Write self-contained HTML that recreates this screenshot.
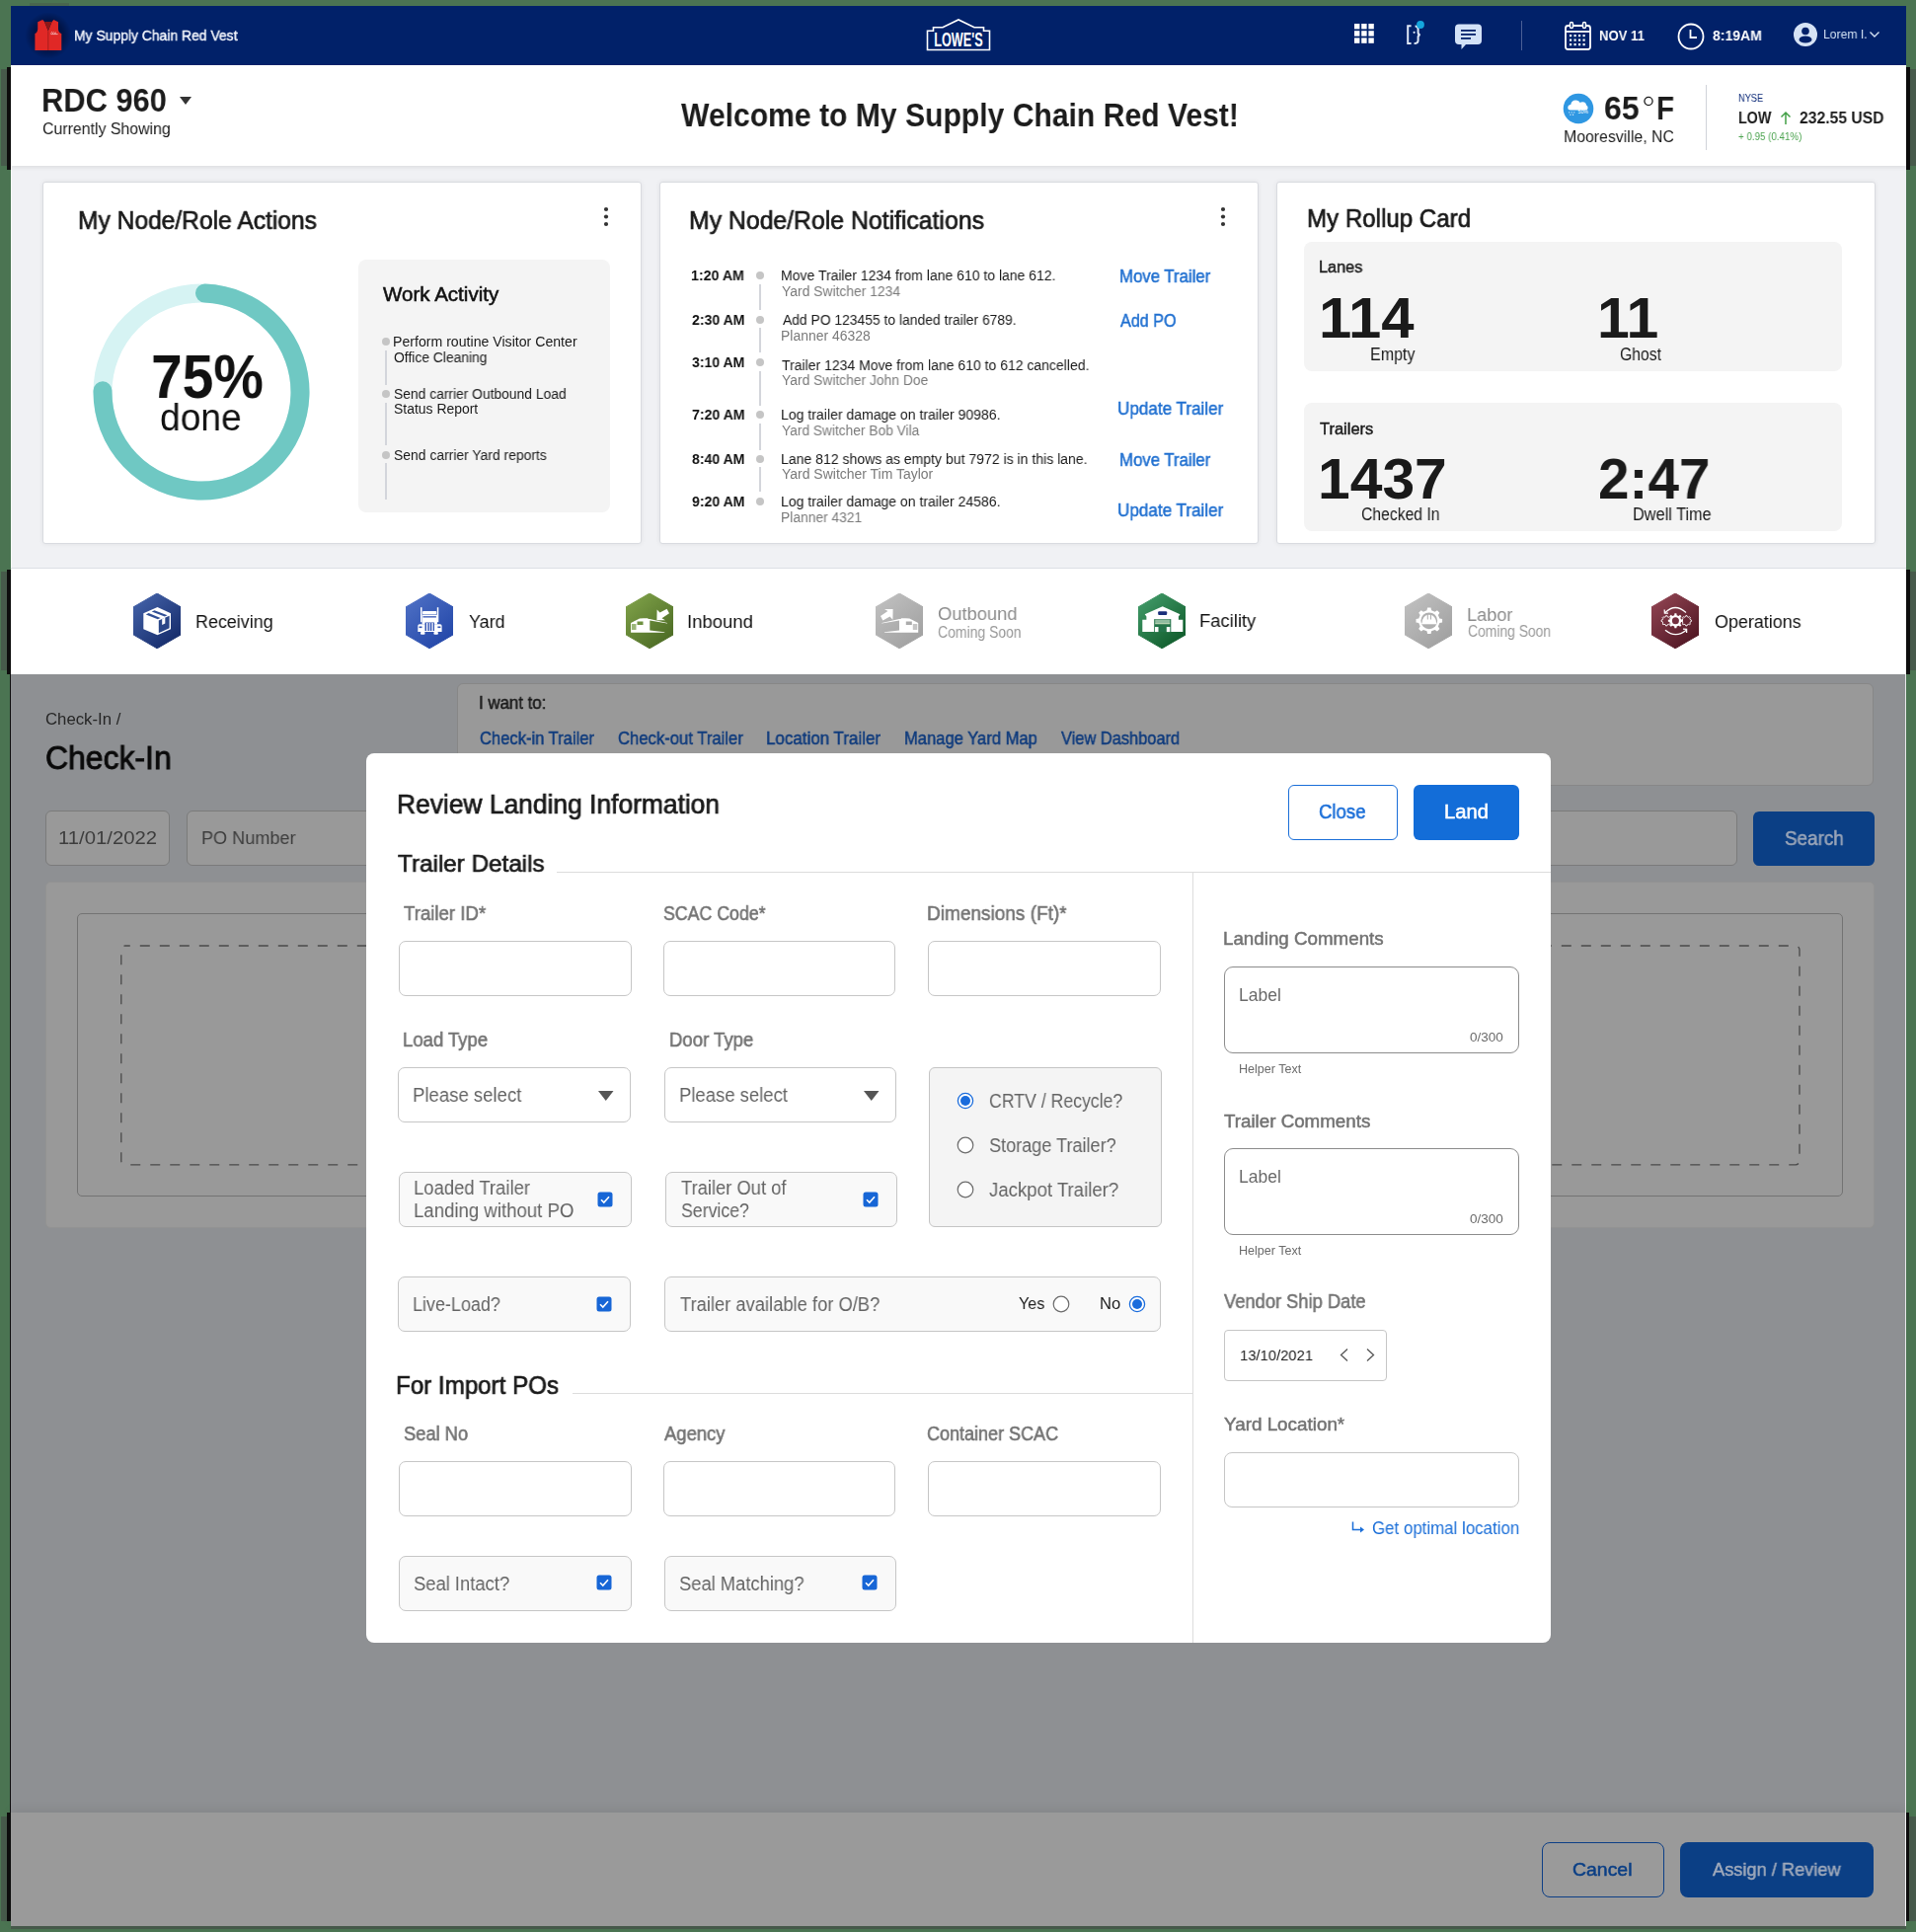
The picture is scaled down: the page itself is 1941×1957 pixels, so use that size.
<!DOCTYPE html>
<html><head><meta charset="utf-8"><style>
html,body{margin:0;padding:0;}
body{width:1941px;height:1957px;position:relative;overflow:hidden;background:#4b7452;font-family:"Liberation Sans",sans-serif;}
body>div,body>svg,body>span{position:absolute;box-sizing:border-box;}
.t{white-space:nowrap;line-height:1;transform-origin:0 0;will-change:transform;}
.bm{display:inline-block;width:0;height:0;}
</style></head><body>
<div style="left:11.0px;top:6.0px;width:1920.0px;height:1945.0px;background:#f0f1f4;"></div>
<div style="left:11.0px;top:168.0px;width:1.0px;height:407.0px;background:#fff;"></div>
<div style="left:1.0px;top:70.0px;width:6.0px;height:98.0px;background:rgba(70,70,70,0.55);"></div>
<div style="left:7.0px;top:68.0px;width:4.0px;height:104.0px;background:#0d0d0d;"></div>
<div style="left:1935.0px;top:70.0px;width:6.0px;height:98.0px;background:rgba(70,70,70,0.55);"></div>
<div style="left:1931.0px;top:68.0px;width:4.0px;height:104.0px;background:#0d0d0d;"></div>
<div style="left:1.0px;top:579.0px;width:6.0px;height:100.0px;background:rgba(70,70,70,0.55);"></div>
<div style="left:7.0px;top:577.0px;width:4.0px;height:106.0px;background:#0d0d0d;"></div>
<div style="left:1935.0px;top:579.0px;width:6.0px;height:100.0px;background:rgba(70,70,70,0.55);"></div>
<div style="left:1931.0px;top:577.0px;width:4.0px;height:106.0px;background:#0d0d0d;"></div>
<div style="left:10.0px;top:683.0px;width:1.0px;height:1154.0px;background:#0d0d0d;"></div>
<div style="left:1.0px;top:1840.0px;width:6.0px;height:106.0px;background:rgba(70,70,70,0.55);"></div>
<div style="left:7.0px;top:1836.0px;width:4.0px;height:110.0px;background:#0d0d0d;"></div>
<div style="left:1934.0px;top:1840.0px;width:7.0px;height:106.0px;background:rgba(70,70,70,0.55);"></div>
<div style="left:1931.0px;top:1836.0px;width:3.0px;height:110.0px;background:#0d0d0d;"></div>
<div style="left:11.0px;top:1951.0px;width:1920.0px;height:3.0px;background:rgba(70,70,70,0.55);"></div>
<div style="left:30.0px;top:3.0px;width:40.0px;height:3.0px;background:rgba(70,70,70,0.3);"></div>
<div style="left:11.0px;top:6.0px;width:1920.0px;height:60.0px;background:#012169;"></div>
<div style="left:25.0px;top:12.0px;width:48.0px;height:48.0px;background:radial-gradient(circle at 50% 50%, rgba(0,8,40,0.85) 0%, rgba(0,8,40,0.5) 45%, rgba(1,33,105,0) 70%);"></div>
<svg style="left:34.0px;top:19.0px;" width="29" height="34" viewBox="0 0 29 34">
<path d="M1.4 32 L1.4 15.1 Q3.8 14.2 4.2 10.4 L4.2 3.2 L9.2 1 L11 3 L14.8 12.3 L18.6 3 L20.4 1 L25 3.2 L25 10.4 Q25.4 14.2 28.3 15.1 L28.3 32 Z" fill="#e02826"/>
<path d="M11 3 L18.6 3 L14.8 12.3 Z" fill="#8e1818"/>
<path d="M14.8 12.3 L14.8 32" stroke="#a01c1c" stroke-width="0.9"/>
<path d="M17.6 14.6 L18.6 13.4 L19.6 14.6 L20.6 13.6 L21.6 14.6 L23 13.8 M17.4 15.6 L24.6 15.6" fill="none" stroke="#f6dada" stroke-width="0.7"/></svg>
<span id="tx0" class="t" style="left:74.66px;top:29.00px;font-size:14.53px;color:#f2f5fc;-webkit-text-stroke:0.39px #f2f5fc;transform:scaleX(0.9581);">My Supply Chain Red Vest</span>
<svg style="left:937.0px;top:18.0px;" width="68" height="35" viewBox="0 0 68 35">
<path d="M2.5 32.5 L2.5 13.2 L8.5 13.2 L8.5 9.8 L18 9.8 L34 2 L50 9.8 L59.5 9.8 L59.5 13.2 L65.5 13.2 L65.5 32.5 Z" fill="none" stroke="#fff" stroke-width="1.6"/>
<text x="9.2" y="28.8" font-family="Liberation Sans" font-weight="700" font-size="20" fill="#fff" textLength="49.4" lengthAdjust="spacingAndGlyphs">LOWE'S</text></svg>
<svg style="left:1372.0px;top:23.5px;" width="20" height="20" viewBox="0 0 20 20"><rect x="0" y="0" width="5.4" height="5.4" fill="#fff"/><rect x="7.2" y="0" width="5.4" height="5.4" fill="#fff"/><rect x="14.4" y="0" width="5.4" height="5.4" fill="#fff"/><rect x="0" y="7.2" width="5.4" height="5.4" fill="#fff"/><rect x="7.2" y="7.2" width="5.4" height="5.4" fill="#fff"/><rect x="14.4" y="7.2" width="5.4" height="5.4" fill="#fff"/><rect x="0" y="14.4" width="5.4" height="5.4" fill="#fff"/><rect x="7.2" y="14.4" width="5.4" height="5.4" fill="#fff"/><rect x="14.4" y="14.4" width="5.4" height="5.4" fill="#fff"/></svg>
<svg style="left:1422.0px;top:20.0px;" width="24" height="26" viewBox="0 0 24 26">
<path d="M7.6 6.2 L4.2 6.2 L4.2 24 L7.6 24" fill="none" stroke="#dfe8f7" stroke-width="2"/>
<path d="M10.6 24 Q14.6 24 14.6 21 L14.6 17.5 Q14.6 15.6 16.6 15.2 Q14.6 14.8 14.6 12.9 L14.6 9.5 Q14.6 6.6 11.6 6.6" fill="none" stroke="#dfe8f7" stroke-width="2"/>
<circle cx="10.6" cy="12.8" r="1.1" fill="#dfe8f7"/>
<circle cx="17" cy="5" r="3.9" fill="#14a6dd"/></svg>
<svg style="left:1473.0px;top:23.0px;" width="30" height="29" viewBox="0 0 30 29">
<path d="M5 1.5 L24 1.5 Q28 1.5 28 5.5 L28 18 Q28 22 24 22 L12 22 L7.5 27 L7.5 22 L5 22 Q1 22 1 18 L1 5.5 Q1 1.5 5 1.5 Z" fill="#d3e2f7"/>
<rect x="7" y="7" width="15" height="1.8" fill="#012169"/><rect x="7" y="11" width="15" height="1.8" fill="#012169"/><rect x="7" y="15" width="10" height="1.8" fill="#012169"/></svg>
<div style="left:1540.5px;top:21.0px;width:1.2px;height:30.0px;background:#4a5f96;"></div>
<svg style="left:1584.0px;top:21.0px;" width="29" height="31" viewBox="0 0 29 31">
<rect x="2" y="5" width="25" height="24" rx="2.5" fill="none" stroke="#fff" stroke-width="1.8"/>
<line x1="2" y1="11" x2="27" y2="11" stroke="#fff" stroke-width="1.8"/>
<rect x="6.5" y="1.5" width="3" height="6" rx="1.5" fill="#012169" stroke="#fff" stroke-width="1.5"/>
<rect x="19.5" y="1.5" width="3" height="6" rx="1.5" fill="#012169" stroke="#fff" stroke-width="1.5"/>
<rect x="6" y="14" width="2.2" height="2.2" fill="#fff"/><rect x="10.5" y="14" width="2.2" height="2.2" fill="#fff"/><rect x="15" y="14" width="2.2" height="2.2" fill="#fff"/><rect x="19.5" y="14" width="2.2" height="2.2" fill="#fff"/><rect x="6" y="18.5" width="2.2" height="2.2" fill="#fff"/><rect x="10.5" y="18.5" width="2.2" height="2.2" fill="#fff"/><rect x="15" y="18.5" width="2.2" height="2.2" fill="#fff"/><rect x="19.5" y="18.5" width="2.2" height="2.2" fill="#fff"/><rect x="6" y="23" width="2.2" height="2.2" fill="#fff"/><rect x="10.5" y="23" width="2.2" height="2.2" fill="#fff"/><rect x="15" y="23" width="2.2" height="2.2" fill="#fff"/><rect x="19.5" y="23" width="2.2" height="2.2" fill="#fff"/></svg>
<span id="tx1" class="t" style="left:1620.12px;top:29.00px;font-size:14.53px;color:#ffffff;font-weight:700;transform:scaleX(0.9036);">NOV 11</span>
<svg style="left:1698.0px;top:22.0px;" width="30" height="30" viewBox="0 0 30 30">
<circle cx="15" cy="15" r="12.5" fill="none" stroke="#fff" stroke-width="1.8"/>
<path d="M14.5 8 L14.5 16 L21 16" fill="none" stroke="#fff" stroke-width="1.8"/></svg>
<span id="tx2" class="t" style="left:1735.05px;top:29.00px;font-size:14.53px;color:#ffffff;font-weight:700;transform:scaleX(0.9660);">8:19AM</span>
<svg style="left:1816.0px;top:22.0px;" width="26" height="26" viewBox="0 0 26 26">
<circle cx="13" cy="13" r="12" fill="#d6e3f5"/>
<circle cx="13" cy="9.5" r="3.8" fill="#012169"/>
<ellipse cx="13" cy="18" rx="6.5" ry="3.6" fill="#012169"/></svg>
<span id="tx3" class="t" style="left:1846.50px;top:28.20px;font-size:13.08px;color:#d6e3f5;transform:scaleX(0.9296);">Lorem I.</span>
<svg style="left:1893.0px;top:31.0px;" width="12" height="8" viewBox="0 0 12 8"><path d="M1.5 1.5 L6 6 L10.5 1.5" fill="none" stroke="#d6e3f5" stroke-width="1.4"/></svg>
<div style="left:11.0px;top:66.0px;width:1920.0px;height:102.0px;background:#fff;box-shadow:0 2px 4px rgba(0,0,0,0.08);"></div>
<span id="tx4" class="t" style="left:41.74px;top:86.20px;font-size:32.85px;color:#1c1c1c;font-weight:700;transform:scaleX(0.9394);">RDC 960</span>
<svg style="left:181.0px;top:97.0px;" width="14" height="10" viewBox="0 0 14 10"><path d="M1 1 L13 1 L7 9 Z" fill="#333"/></svg>
<span id="tx5" class="t" style="left:42.99px;top:121.90px;font-size:17.01px;color:#1c1c1c;transform:scaleX(0.9339);">Currently Showing</span>
<span id="tx6" class="t" style="left:689.97px;top:100.00px;font-size:33.43px;color:#1c1c1c;font-weight:700;transform:scaleX(0.9008);">Welcome to My Supply Chain Red Vest!</span>
<svg style="left:1583.0px;top:94.0px;" width="32" height="32" viewBox="0 0 32 32">
<circle cx="16" cy="16" r="15.3" fill="#2f97e2"/>
<path d="M8 17.5 Q5.3 17.5 5.3 15 Q5.3 12.3 8.3 12 Q8.8 7.4 13.3 7.4 Q16.6 7.4 17.6 10 Q18.6 9.3 20.2 9.3 Q23.6 9.3 24 12.6 Q25.6 13.2 25.6 15.2 Q25.6 17.5 23.3 17.5 Z" fill="#fff"/>
<text x="15.6" y="20.6" font-family="Liberation Sans" font-size="5.2" fill="#fff">50%</text>
<circle cx="6.8" cy="19.8" r="0.6" fill="#fff"/><circle cx="9.2" cy="19.8" r="0.6" fill="#fff"/><circle cx="11.8" cy="19.8" r="0.6" fill="#fff"/><circle cx="8" cy="22.2" r="0.6" fill="#fff"/><circle cx="10.6" cy="22.2" r="0.6" fill="#fff"/></svg>
<span id="tx7" class="t" style="left:1625.12px;top:93.00px;font-size:33.87px;color:#1c1c1c;font-weight:700;transform:scaleX(0.9496);">65</span>
<svg style="left:1663.5px;top:96.8px;" width="12" height="12" viewBox="0 0 12 12"><circle cx="6" cy="5.5" r="4.1" fill="none" stroke="#1c1c1c" stroke-width="1.3"/></svg>
<span id="tx8" class="t" style="left:1678.02px;top:93.00px;font-size:33.87px;color:#1c1c1c;font-weight:700;transform:scaleX(0.8730);">F</span>
<span id="tx9" class="t" style="left:1583.70px;top:130.30px;font-size:17.30px;color:#1c1c1c;transform:scaleX(0.9175);">Mooresville, NC</span>
<div style="left:1728.0px;top:86.0px;width:1.2px;height:66.0px;background:#d0d3d9;"></div>
<span id="tx10" class="t" style="left:1760.84px;top:95.00px;font-size:10.32px;color:#0c2a78;transform:scaleX(0.8954);">NYSE</span>
<span id="tx11" class="t" style="left:1760.64px;top:112.10px;font-size:16.57px;color:#1c1c1c;font-weight:700;transform:scaleX(0.8636);">LOW</span>
<svg style="left:1802.0px;top:112.0px;" width="14" height="15" viewBox="0 0 14 15"><path d="M7 14 L7 2 M2.5 6.5 L7 2 L11.5 6.5" fill="none" stroke="#43a047" stroke-width="1.5"/></svg>
<span id="tx12" class="t" style="left:1822.76px;top:112.10px;font-size:16.57px;color:#1c1c1c;font-weight:700;transform:scaleX(0.9476);">232.55 USD</span>
<span id="tx13" class="t" style="left:1760.52px;top:133.00px;font-size:11.19px;color:#4ba34f;transform:scaleX(0.8736);">+ 0.95 (0.41%)</span>
<div style="left:43.0px;top:184.0px;width:607.0px;height:367.0px;background:#fff;border:1px solid #d9dbe0;border-radius:3px;box-shadow:0 0 5px rgba(0,0,0,0.07);"></div>
<div style="left:668.0px;top:184.0px;width:607.0px;height:367.0px;background:#fff;border:1px solid #d9dbe0;border-radius:3px;box-shadow:0 0 5px rgba(0,0,0,0.07);"></div>
<div style="left:1293.0px;top:184.0px;width:607.0px;height:367.0px;background:#fff;border:1px solid #d9dbe0;border-radius:3px;box-shadow:0 0 5px rgba(0,0,0,0.07);"></div>
<span id="tx14" class="t" style="left:78.98px;top:210.70px;font-size:25.15px;color:#1a1a1a;-webkit-text-stroke:0.68px #1a1a1a;transform:scaleX(0.9780);">My Node/Role Actions</span>
<svg style="left:610.0px;top:208.0px;" width="8" height="24" viewBox="0 0 8 24"><circle cx="4" cy="4" r="2.1" fill="#333"/><circle cx="4" cy="11.5" r="2.1" fill="#333"/><circle cx="4" cy="19" r="2.1" fill="#333"/></svg>
<svg style="left:89.0px;top:282.0px;" width="230" height="230" viewBox="0 0 230 230">
<circle cx="115" cy="115" r="100" fill="none" stroke="#d6f3f3" stroke-width="19"/>
<circle cx="115" cy="115" r="100" fill="none" stroke="#6fc8c3" stroke-width="19" stroke-linecap="round" stroke-dasharray="468.097 628.319" transform="rotate(-88 115 115)"/></svg>
<span id="tx15" class="t" style="left:152.55px;top:350.00px;font-size:62.50px;color:#111;font-weight:700;transform:scaleX(0.9109);">75%</span>
<span id="tx16" class="t" style="left:162.04px;top:403.60px;font-size:38.00px;color:#111;transform:scaleX(0.9771);">done</span>
<div style="left:363.0px;top:263.0px;width:255.0px;height:255.5px;background:#f4f4f4;border-radius:8px;"></div>
<span id="tx17" class="t" style="left:387.71px;top:287.80px;font-size:20.20px;color:#111;-webkit-text-stroke:0.55px #111;transform:scaleX(1.0179);">Work Activity</span>
<div style="left:387.0px;top:341.8px;width:8.0px;height:8.0px;background:#c5c5c5;border-radius:50%;"></div>
<div style="left:387.0px;top:394.8px;width:8.0px;height:8.0px;background:#c5c5c5;border-radius:50%;"></div>
<div style="left:387.0px;top:456.8px;width:8.0px;height:8.0px;background:#c5c5c5;border-radius:50%;"></div>
<div style="left:390.2px;top:355.0px;width:1.8px;height:34.6px;background:#d3d5db;"></div>
<div style="left:390.2px;top:408.2px;width:1.8px;height:43.1px;background:#d3d5db;"></div>
<div style="left:390.2px;top:469.0px;width:1.8px;height:37.3px;background:#d3d5db;"></div>
<span id="tx18" class="t" style="left:398.24px;top:339.60px;font-size:13.95px;color:#1a1a1a;transform:scaleX(1.0135);">Perform routine Visitor Center</span>
<span id="tx19" class="t" style="left:398.74px;top:355.50px;font-size:13.95px;color:#1a1a1a;transform:scaleX(0.9937);">Office Cleaning</span>
<span id="tx20" class="t" style="left:398.77px;top:392.60px;font-size:13.95px;color:#1a1a1a;transform:scaleX(0.9922);">Send carrier Outbound Load</span>
<span id="tx21" class="t" style="left:398.77px;top:408.40px;font-size:13.95px;color:#1a1a1a;">Status Report</span>
<span id="tx22" class="t" style="left:398.77px;top:454.60px;font-size:13.95px;color:#1a1a1a;transform:scaleX(0.9970);">Send carrier Yard reports</span>
<span id="tx23" class="t" style="left:698.47px;top:210.60px;font-size:25.15px;color:#1a1a1a;-webkit-text-stroke:0.68px #1a1a1a;transform:scaleX(0.9859);">My Node/Role Notifications</span>
<svg style="left:1235.0px;top:208.0px;" width="8" height="24" viewBox="0 0 8 24"><circle cx="4" cy="4" r="2.1" fill="#333"/><circle cx="4" cy="11.5" r="2.1" fill="#333"/><circle cx="4" cy="19" r="2.1" fill="#333"/></svg>
<span id="tx24" class="t" style="left:700.40px;top:272.00px;font-size:14.39px;color:#111;font-weight:700;transform:scaleX(0.9881);">1:20 AM</span>
<div style="left:766.0px;top:275.0px;width:8.0px;height:8.0px;background:#c5c5c5;border-radius:50%;"></div>
<span id="tx25" class="t" style="left:791.45px;top:272.00px;font-size:14.39px;color:#1a1a1a;transform:scaleX(0.9736);">Move Trailer 1234 from lane 610 to lane 612.</span>
<span id="tx26" class="t" style="left:792.29px;top:288.90px;font-size:13.95px;color:#7a7a7a;transform:scaleX(0.9959);">Yard Switcher 1234</span>
<span id="tx27" class="t" style="left:700.81px;top:317.00px;font-size:14.39px;color:#111;font-weight:700;transform:scaleX(0.9806);">2:30 AM</span>
<div style="left:766.0px;top:320.1px;width:8.0px;height:8.0px;background:#c5c5c5;border-radius:50%;"></div>
<span id="tx28" class="t" style="left:792.57px;top:317.00px;font-size:14.39px;color:#1a1a1a;transform:scaleX(0.9647);">Add PO 123455 to landed trailer 6789.</span>
<span id="tx29" class="t" style="left:791.45px;top:333.50px;font-size:13.95px;color:#7a7a7a;">Planner 46328</span>
<span id="tx30" class="t" style="left:700.98px;top:360.00px;font-size:14.39px;color:#111;font-weight:700;transform:scaleX(0.9775);">3:10 AM</span>
<div style="left:766.0px;top:363.1px;width:8.0px;height:8.0px;background:#c5c5c5;border-radius:50%;"></div>
<span id="tx31" class="t" style="left:792.29px;top:362.80px;font-size:14.39px;color:#1a1a1a;transform:scaleX(0.9734);">Trailer 1234 Move from lane 610 to 612 cancelled.</span>
<span id="tx32" class="t" style="left:792.30px;top:379.30px;font-size:13.95px;color:#7a7a7a;transform:scaleX(0.9937);">Yard Switcher John Doe</span>
<span id="tx33" class="t" style="left:700.69px;top:412.90px;font-size:14.39px;color:#111;font-weight:700;transform:scaleX(0.9828);">7:20 AM</span>
<div style="left:766.0px;top:416.0px;width:8.0px;height:8.0px;background:#c5c5c5;border-radius:50%;"></div>
<span id="tx34" class="t" style="left:791.45px;top:412.90px;font-size:14.39px;color:#1a1a1a;transform:scaleX(0.9771);">Log trailer damage on trailer 90986.</span>
<span id="tx35" class="t" style="left:792.30px;top:429.90px;font-size:13.95px;color:#7a7a7a;transform:scaleX(0.9861);">Yard Switcher Bob Vila</span>
<span id="tx36" class="t" style="left:700.85px;top:457.70px;font-size:14.39px;color:#111;font-weight:700;transform:scaleX(0.9798);">8:40 AM</span>
<div style="left:766.0px;top:460.8px;width:8.0px;height:8.0px;background:#c5c5c5;border-radius:50%;"></div>
<span id="tx37" class="t" style="left:791.45px;top:457.70px;font-size:14.39px;color:#1a1a1a;transform:scaleX(0.9764);">Lane 812 shows as empty but 7972 is in this lane.</span>
<span id="tx38" class="t" style="left:792.29px;top:474.20px;font-size:13.95px;color:#7a7a7a;transform:scaleX(1.0026);">Yard Switcher Tim Taylor</span>
<span id="tx39" class="t" style="left:700.81px;top:500.70px;font-size:14.39px;color:#111;font-weight:700;transform:scaleX(0.9806);">9:20 AM</span>
<div style="left:766.0px;top:503.8px;width:8.0px;height:8.0px;background:#c5c5c5;border-radius:50%;"></div>
<span id="tx40" class="t" style="left:791.45px;top:500.70px;font-size:14.39px;color:#1a1a1a;transform:scaleX(0.9771);">Log trailer damage on trailer 24586.</span>
<span id="tx41" class="t" style="left:791.47px;top:517.50px;font-size:13.95px;color:#7a7a7a;transform:scaleX(0.9902);">Planner 4321</span>
<div style="left:769.2px;top:288.2px;width:1.8px;height:26.0px;background:#d3d5db;"></div>
<div style="left:769.2px;top:332.1px;width:1.8px;height:25.1px;background:#d3d5db;"></div>
<div style="left:769.2px;top:376.2px;width:1.8px;height:34.4px;background:#d3d5db;"></div>
<div style="left:769.2px;top:429.3px;width:1.8px;height:27.1px;background:#d3d5db;"></div>
<div style="left:769.2px;top:473.3px;width:1.8px;height:25.0px;background:#d3d5db;"></div>
<span id="tx42" class="t" style="left:1133.62px;top:272.00px;font-size:17.88px;color:#1f6fd0;-webkit-text-stroke:0.48px #1f6fd0;transform:scaleX(0.9399);">Move Trailer</span>
<span id="tx43" class="t" style="left:1134.97px;top:316.70px;font-size:17.88px;color:#1f6fd0;-webkit-text-stroke:0.48px #1f6fd0;transform:scaleX(0.9034);">Add PO</span>
<span id="tx44" class="t" style="left:1132.18px;top:406.30px;font-size:17.88px;color:#1f6fd0;-webkit-text-stroke:0.48px #1f6fd0;transform:scaleX(0.9566);">Update Trailer</span>
<span id="tx45" class="t" style="left:1133.62px;top:457.70px;font-size:17.88px;color:#1f6fd0;-webkit-text-stroke:0.48px #1f6fd0;transform:scaleX(0.9399);">Move Trailer</span>
<span id="tx46" class="t" style="left:1132.18px;top:508.90px;font-size:17.88px;color:#1f6fd0;-webkit-text-stroke:0.48px #1f6fd0;transform:scaleX(0.9566);">Update Trailer</span>
<span id="tx47" class="t" style="left:1323.52px;top:208.00px;font-size:26.16px;color:#1a1a1a;-webkit-text-stroke:0.71px #1a1a1a;transform:scaleX(0.9211);">My Rollup Card</span>
<div style="left:1321.4px;top:245.0px;width:545.1px;height:131.0px;background:#f4f4f4;border-radius:8px;"></div>
<div style="left:1321.4px;top:408.0px;width:545.1px;height:130.3px;background:#f4f4f4;border-radius:8px;"></div>
<span id="tx48" class="t" style="left:1335.66px;top:262.00px;font-size:16.42px;color:#1a1a1a;-webkit-text-stroke:0.44px #1a1a1a;transform:scaleX(0.9915);">Lanes</span>
<span id="tx49" class="t" style="left:1335.53px;top:293.00px;font-size:58.14px;color:#1a1a1a;font-weight:700;transform:scaleX(1.0300);">114</span>
<span id="tx50" class="t" style="left:1388.08px;top:350.75px;font-size:17.44px;color:#1a1a1a;transform:scaleX(0.9196);">Empty</span>
<span id="tx51" class="t" style="left:1617.78px;top:293.00px;font-size:58.14px;color:#1a1a1a;font-weight:700;transform:scaleX(1.0147);">11</span>
<span id="tx52" class="t" style="left:1641.21px;top:350.75px;font-size:17.44px;color:#1a1a1a;transform:scaleX(0.9006);">Ghost</span>
<span id="tx53" class="t" style="left:1336.63px;top:425.60px;font-size:16.42px;color:#1a1a1a;-webkit-text-stroke:0.44px #1a1a1a;transform:scaleX(1.0051);">Trailers</span>
<span id="tx54" class="t" style="left:1335.30px;top:455.50px;font-size:58.14px;color:#1a1a1a;font-weight:700;transform:scaleX(1.0114);">1437</span>
<span id="tx55" class="t" style="left:1379.20px;top:513.00px;font-size:17.44px;color:#1a1a1a;transform:scaleX(0.9014);">Checked In</span>
<span id="tx56" class="t" style="left:1619.03px;top:455.50px;font-size:58.14px;color:#1a1a1a;font-weight:700;transform:scaleX(0.9752);">2:47</span>
<span id="tx57" class="t" style="left:1653.66px;top:513.00px;font-size:17.44px;color:#1a1a1a;transform:scaleX(0.9343);">Dwell Time</span>
<div style="left:11.0px;top:575.0px;width:1920.0px;height:108.0px;background:#fff;border-top:1px solid #dcdfe5;"></div>
<svg style="left:134.7px;top:601.0px;" width="48.3" height="55.8" viewBox="0 0 48.3 55.8"><defs><linearGradient id="h1" x1="0.2" y1="0.1" x2="0.85" y2="0.95"><stop offset="0" stop-color="#3f5da3"/><stop offset="1" stop-color="#142a69"/></linearGradient></defs><polygon points="24.15,0 48.3,13.95 48.3,41.85 24.15,55.8 0,41.85 0,13.95" fill="url(#h1)" stroke="url(#h1)" stroke-width="1" stroke-linejoin="round"/><polygon points="24.5,14 38,20.3 38,36.2 24.5,42.2 10.3,36.2 10.3,20.3" fill="#fff"/>
<polygon points="25.8,27.6 36.6,22.7 36.6,35.3 25.8,40.2" fill="#2a4688"/>
<polygon points="29.2,26 32.3,24.6 32.3,30.6 29.2,32" fill="#fff"/>
<polygon points="12.8,21.4 15.6,20.1 27.6,24.9 24.8,26.2" fill="#304f95"/>
<polygon points="18.7,18.5 21.5,17.2 34.6,22.2 31.8,23.5" fill="#304f95"/></svg>
<svg style="left:410.8px;top:601.0px;" width="48.2" height="55.8" viewBox="0 0 48.2 55.8"><defs><linearGradient id="h2" x1="0.2" y1="0.1" x2="0.85" y2="0.95"><stop offset="0" stop-color="#4a6cc2"/><stop offset="1" stop-color="#2246a8"/></linearGradient></defs><polygon points="24.1,0 48.2,13.95 48.2,41.85 24.1,55.8 0,41.85 0,13.95" fill="url(#h2)" stroke="url(#h2)" stroke-width="1" stroke-linejoin="round"/><rect x="15" y="14.2" width="1.5" height="15" fill="#fff"/><rect x="31.8" y="14.2" width="1.5" height="15" fill="#fff"/>
<rect x="17" y="17.9" width="14.3" height="3.3" rx="1" fill="#fff"/>
<rect x="16.6" y="21.7" width="15.4" height="9.6" fill="#fff"/>
<rect x="17.5" y="23.2" width="13.4" height="1.3" fill="#3556b5"/>
<path d="M12.3 33 Q12.3 31.2 14 31.2 L34.8 31.2 Q36.6 31.2 36.6 33 L36.6 39.1 L12.3 39.1 Z" fill="#fff"/>
<rect x="19.5" y="29.5" width="9.5" height="8.5" fill="#3556b5"/>
<rect x="21" y="30" width="1.3" height="8" fill="#fff"/><rect x="23.7" y="30" width="1.3" height="8" fill="#c8d2ee"/><rect x="26.4" y="30" width="1.3" height="8" fill="#fff"/>
<rect x="13.5" y="33.5" width="3" height="1.6" fill="#3556b5"/><rect x="32.4" y="33.5" width="3" height="1.6" fill="#3556b5"/>
<rect x="15" y="39.1" width="4.5" height="2.7" rx="1" fill="#fff"/><rect x="28.4" y="39.1" width="4.5" height="2.7" rx="1" fill="#fff"/></svg>
<svg style="left:633.8px;top:601.0px;" width="48.2" height="55.8" viewBox="0 0 48.2 55.8"><defs><linearGradient id="h3" x1="0.2" y1="0.1" x2="0.85" y2="0.95"><stop offset="0" stop-color="#7a9c45"/><stop offset="1" stop-color="#4b6a24"/></linearGradient></defs><polygon points="24.1,0 48.2,13.95 48.2,41.85 24.1,55.8 0,41.85 0,13.95" fill="url(#h3)" stroke="url(#h3)" stroke-width="1" stroke-linejoin="round"/><path d="M5.1 30 L9 28 L14 25.5 L18 25.3 L22.5 25.3 L22.5 26 L24.3 26 L42 29.9 L42 30.6 L24.3 27.6 L24.3 37.4 L39.3 39.2 L39.3 39.8 L5.1 39.8 Z" fill="#fff"/>
<rect x="6" y="31" width="4.5" height="6" fill="#9cb77a"/>
<rect x="11.5" y="28.5" width="6" height="3.5" fill="#6e9140"/>
<path d="M44 20.3 L36.5 25.2 L40 27.2 L31.4 27.2 L31.6 16.5 L34.5 19.6 L41.6 15.8 Z" fill="#fff"/></svg>
<svg style="left:886.7px;top:601.0px;" width="48.3" height="55.8" viewBox="0 0 48.3 55.8"><defs><linearGradient id="h4" x1="0.2" y1="0.1" x2="0.85" y2="0.95"><stop offset="0" stop-color="#bdbdbd"/><stop offset="1" stop-color="#a0a0a0"/></linearGradient></defs><polygon points="24.15,0 48.3,13.95 48.3,41.85 24.15,55.8 0,41.85 0,13.95" fill="url(#h4)" stroke="url(#h4)" stroke-width="1" stroke-linejoin="round"/><path d="M43.2 30 L39.3 28 L34.3 25.5 L30.3 25.3 L25.8 25.3 L25.8 26 L24 26 L6.3 29.9 L6.3 30.6 L24 27.6 L24 37.4 L9 39.2 L9 39.8 L43.2 39.8 Z" fill="#fff"/>
<rect x="37.8" y="31" width="4.5" height="6" fill="#c6c6c6"/>
<rect x="30.8" y="28.5" width="6" height="3.5" fill="#ababab"/>
<path d="M5 22.9 L12.4 18 L9 16 L17.6 15.9 L17.4 26.7 L14.5 23.6 L7.4 27.4 Z" fill="#fff"/></svg>
<svg style="left:1152.7px;top:601.0px;" width="48.3" height="55.8" viewBox="0 0 48.3 55.8"><defs><linearGradient id="h5" x1="0.2" y1="0.1" x2="0.85" y2="0.95"><stop offset="0" stop-color="#3d9563"/><stop offset="1" stop-color="#0e5a2a"/></linearGradient></defs><polygon points="24.15,0 48.3,13.95 48.3,41.85 24.15,55.8 0,41.85 0,13.95" fill="url(#h5)" stroke="url(#h5)" stroke-width="1" stroke-linejoin="round"/><path d="M24.7 13.2 L42.5 21.3 L40.9 23.4 L40.9 26.8 L45.3 26.8 L45.3 39.1 L4.3 39.1 L4.3 26.8 L8.4 26.8 L8.4 23.4 L6.7 21.3 Z" fill="#fff"/>
<rect x="16.2" y="25.1" width="17.1" height="14" fill="#24744a"/>
<rect x="15.5" y="24.6" width="18.5" height="1.5" fill="#fff"/>
<rect x="17.2" y="26.5" width="15" height="4" fill="#8fbb9f"/><rect x="17.2" y="30.3" width="15" height="0.9" fill="#dbe9c9"/>
<rect x="17" y="34" width="3.5" height="5.1" fill="#fff"/><rect x="28.8" y="34" width="3.5" height="5.1" fill="#fff"/>
<rect x="20.2" y="18.3" width="9" height="3.7" rx="1" fill="#1a2f7a"/></svg>
<svg style="left:1422.7px;top:601.0px;" width="48.3" height="55.8" viewBox="0 0 48.3 55.8"><defs><linearGradient id="h6" x1="0.2" y1="0.1" x2="0.85" y2="0.95"><stop offset="0" stop-color="#bdbdbd"/><stop offset="1" stop-color="#a0a0a0"/></linearGradient></defs><polygon points="24.15,0 48.3,13.95 48.3,41.85 24.15,55.8 0,41.85 0,13.95" fill="url(#h6)" stroke="url(#h6)" stroke-width="1" stroke-linejoin="round"/><path d="M22.49 17.25 L23.07 14.51 L26.53 14.51 L27.11 17.25 L30.62 18.70 L32.97 17.18 L35.42 19.63 L33.90 21.98 L35.35 25.49 L38.09 26.07 L38.09 29.53 L35.35 30.11 L33.90 33.62 L35.42 35.97 L32.97 38.42 L30.62 36.90 L27.11 38.35 L26.53 41.09 L23.07 41.09 L22.49 38.35 L18.98 36.90 L16.63 38.42 L14.18 35.97 L15.70 33.62 L14.25 30.11 L11.51 29.53 L11.51 26.07 L14.25 25.49 L15.70 21.98 L14.18 19.63 L16.63 17.18 L18.98 18.70 Z" fill="#fff"/>
<circle cx="24.8" cy="27.8" r="8.4" fill="#b0b0b0"/>
<path d="M17.6 30.2 Q18 22 24.8 21.8 Q31.6 22 32 30.2 Z" fill="#fff"/>
<rect x="17.2" y="29.8" width="15.2" height="1.5" fill="#fff"/>
<rect x="22.8" y="21.5" width="1" height="5" fill="#b0b0b0"/><rect x="26" y="21.5" width="1" height="5" fill="#b0b0b0"/></svg>
<svg style="left:1672.7px;top:601.0px;" width="48.3" height="55.8" viewBox="0 0 48.3 55.8"><defs><linearGradient id="h7" x1="0.2" y1="0.1" x2="0.85" y2="0.95"><stop offset="0" stop-color="#8b404e"/><stop offset="1" stop-color="#4e1522"/></linearGradient></defs><polygon points="24.15,0 48.3,13.95 48.3,41.85 24.15,55.8 0,41.85 0,13.95" fill="url(#h7)" stroke="url(#h7)" stroke-width="1" stroke-linejoin="round"/><path d="M23.16 22.13 L23.42 20.26 L25.38 20.26 L25.64 22.13 L27.53 22.92 L29.03 21.78 L30.42 23.17 L29.28 24.67 L30.07 26.56 L31.94 26.82 L31.94 28.78 L30.07 29.04 L29.28 30.93 L30.42 32.43 L29.03 33.82 L27.53 32.68 L25.64 33.47 L25.38 35.34 L23.42 35.34 L23.16 33.47 L21.27 32.68 L19.77 33.82 L18.38 32.43 L19.52 30.93 L18.73 29.04 L16.86 28.78 L16.86 26.82 L18.73 26.56 L19.52 24.67 L18.38 23.17 L19.77 21.78 L21.27 22.92 Z" fill="#fff"/><circle cx="24.4" cy="27.8" r="3.5" fill="#743040"/>
<path d="M14.38 23.68 L14.59 22.64 L15.81 22.64 L16.02 23.68 L17.53 24.31 L18.42 23.72 L19.28 24.58 L18.69 25.47 L19.32 26.98 L20.36 27.19 L20.36 28.41 L19.32 28.62 L18.69 30.13 L19.28 31.02 L18.42 31.88 L17.53 31.29 L16.02 31.92 L15.81 32.96 L14.59 32.96 L14.38 31.92 L12.87 31.29 L11.98 31.88 L11.12 31.02 L11.71 30.13 L11.08 28.62 L10.04 28.41 L10.04 27.19 L11.08 26.98 L11.71 25.47 L11.12 24.58 L11.98 23.72 L12.87 24.31 Z" fill="none" stroke="#fff" stroke-width="0.9"/><path d="M34.58 23.68 L34.79 22.64 L36.01 22.64 L36.22 23.68 L37.73 24.31 L38.62 23.72 L39.48 24.58 L38.89 25.47 L39.52 26.98 L40.56 27.19 L40.56 28.41 L39.52 28.62 L38.89 30.13 L39.48 31.02 L38.62 31.88 L37.73 31.29 L36.22 31.92 L36.01 32.96 L34.79 32.96 L34.58 31.92 L33.07 31.29 L32.18 31.88 L31.32 31.02 L31.91 30.13 L31.28 28.62 L30.24 28.41 L30.24 27.19 L31.28 26.98 L31.91 25.47 L31.32 24.58 L32.18 23.72 L33.07 24.31 Z" fill="none" stroke="#fff" stroke-width="0.9"/>
<path d="M35 19.5 Q24 9.5 14 19.5" fill="none" stroke="#fff" stroke-width="1.2"/>
<path d="M13.2 16.5 L13.4 20.2 L17 20.2" fill="none" stroke="#fff" stroke-width="1.3"/>
<path d="M14 37.2 Q24.4 46 35.4 37.2" fill="none" stroke="#fff" stroke-width="1.2"/>
<path d="M32 36.2 L35.6 36.4 L35.6 40" fill="none" stroke="#fff" stroke-width="1.3"/></svg>
<span id="tx58" class="t" style="left:198.13px;top:621.00px;font-size:18.90px;color:#111;transform:scaleX(0.9478);">Receiving</span>
<span id="tx59" class="t" style="left:474.61px;top:620.60px;font-size:18.90px;color:#111;transform:scaleX(0.9490);">Yard</span>
<span id="tx60" class="t" style="left:696.29px;top:620.60px;font-size:18.90px;color:#111;transform:scaleX(0.9796);">Inbound</span>
<span id="tx61" class="t" style="left:950.13px;top:613.00px;font-size:18.90px;color:#8c8c8c;transform:scaleX(0.9694);">Outbound</span>
<span id="tx62" class="t" style="left:950.29px;top:632.50px;font-size:15.84px;color:#999;transform:scaleX(0.8823);">Coming Soon</span>
<span id="tx63" class="t" style="left:1215.49px;top:620.40px;font-size:18.90px;color:#111;transform:scaleX(0.9739);">Facility</span>
<span id="tx64" class="t" style="left:1486.01px;top:613.50px;font-size:18.90px;color:#8c8c8c;transform:scaleX(0.9620);">Labor</span>
<span id="tx65" class="t" style="left:1486.79px;top:632.40px;font-size:15.84px;color:#999;transform:scaleX(0.8770);">Coming Soon</span>
<span id="tx66" class="t" style="left:1736.65px;top:620.50px;font-size:18.90px;color:#111;transform:scaleX(0.9479);">Operations</span>
<div style="left:11.0px;top:683.0px;width:1920.0px;height:1268.0px;background:#8e9093;"></div>
<div style="left:1930.0px;top:683.0px;width:1.0px;height:1268.0px;background:#e8e8ea;"></div>
<span id="tx67" class="t" style="left:45.65px;top:719.50px;font-size:16.28px;color:#262626;transform:scaleX(1.0300);">Check-In /</span>
<span id="tx68" class="t" style="left:45.88px;top:751.60px;font-size:32.56px;color:#0a0a0a;-webkit-text-stroke:0.88px #0a0a0a;transform:scaleX(0.9804);">Check-In</span>
<div style="left:462.5px;top:691.7px;width:1435.5px;height:104.0px;background:#999;border:1px solid #878787;border-radius:6px;"></div>
<span id="tx69" class="t" style="left:484.75px;top:702.60px;font-size:18.31px;color:#1a1a1a;-webkit-text-stroke:0.49px #1a1a1a;transform:scaleX(0.9198);">I want to:</span>
<span id="tx70" class="t" style="left:485.86px;top:739.30px;font-size:18.17px;color:#0f3b7d;-webkit-text-stroke:0.49px #0f3b7d;transform:scaleX(0.9125);">Check-in Trailer</span>
<span id="tx71" class="t" style="left:625.75px;top:739.30px;font-size:18.17px;color:#0f3b7d;-webkit-text-stroke:0.49px #0f3b7d;transform:scaleX(0.9173);">Check-out Trailer</span>
<span id="tx72" class="t" style="left:775.91px;top:739.30px;font-size:18.17px;color:#0f3b7d;-webkit-text-stroke:0.49px #0f3b7d;transform:scaleX(0.9350);">Location Trailer</span>
<span id="tx73" class="t" style="left:916.24px;top:739.30px;font-size:18.17px;color:#0f3b7d;-webkit-text-stroke:0.49px #0f3b7d;transform:scaleX(0.9130);">Manage Yard Map</span>
<span id="tx74" class="t" style="left:1075.33px;top:739.30px;font-size:18.17px;color:#0f3b7d;-webkit-text-stroke:0.49px #0f3b7d;transform:scaleX(0.9039);">View Dashboard</span>
<div style="left:46.0px;top:821.0px;width:126.0px;height:56.0px;background:#999;border:1px solid #7b7b7b;border-radius:6px;"></div>
<span id="tx75" class="t" style="left:58.95px;top:840.40px;font-size:18.90px;color:#3d3d3d;transform:scaleX(1.0742);">11/01/2022</span>
<div style="left:189.0px;top:821.0px;width:1571.0px;height:56.0px;background:#999;border:1px solid #7b7b7b;border-radius:6px;"></div>
<span id="tx76" class="t" style="left:204.22px;top:840.40px;font-size:18.90px;color:#3d3d3d;transform:scaleX(0.9574);">PO Number</span>
<div style="left:1776.0px;top:821.5px;width:123.0px;height:55.5px;background:#0b3f85;border-radius:6px;"></div>
<span id="tx77" class="t" style="left:1807.54px;top:840.00px;font-size:19.62px;color:#9aa5b8;-webkit-text-stroke:0.53px #9aa5b8;transform:scaleX(0.9604);">Search</span>
<div style="left:46.0px;top:893.0px;width:1853.0px;height:351.0px;background:#999;border:1px solid #929292;border-radius:5px;"></div>
<div style="left:78.0px;top:925.0px;width:1789.0px;height:287.0px;border:1px solid #737373;border-radius:5px;"></div>
<svg style="left:120.5px;top:955.5px;" width="1704" height="226" viewBox="0 0 1704 226"><rect x="1.8" y="2" width="1700.2" height="221.8" rx="4" fill="none" stroke="#4a4a4a" stroke-width="1.3" stroke-dasharray="10 10" stroke-dashoffset="5"/></svg>
<div style="left:11.0px;top:1836.4px;width:1920.0px;height:114.6px;background:#9a9a9a;box-shadow:0 -3px 10px rgba(0,0,0,0.07);"></div>
<div style="left:1562.0px;top:1866.0px;width:123.5px;height:56.0px;border:1.5px solid #0d3f86;border-radius:8px;"></div>
<span id="tx78" class="t" style="left:1593.41px;top:1885.00px;font-size:18.31px;color:#0b3f85;-webkit-text-stroke:0.49px #0b3f85;transform:scaleX(1.0618);">Cancel</span>
<div style="left:1702.0px;top:1866.0px;width:196.0px;height:56.0px;background:#0b3f85;border-radius:8px;"></div>
<span id="tx79" class="t" style="left:1734.76px;top:1885.00px;font-size:18.31px;color:#a0aabb;-webkit-text-stroke:0.49px #a0aabb;transform:scaleX(0.9955);">Assign / Review</span>
<div style="left:371.0px;top:763.0px;width:1200.0px;height:901.0px;background:#fff;border-radius:8px;"></div>
<span id="tx80" class="t" style="left:401.64px;top:800.60px;font-size:27.33px;color:#1a1a1a;-webkit-text-stroke:0.74px #1a1a1a;transform:scaleX(0.9655);">Review Landing Information</span>
<div style="left:1305.0px;top:795.0px;width:110.5px;height:55.5px;border:1px solid #1a6ed8;border-radius:6px;"></div>
<span id="tx81" class="t" style="left:1336.36px;top:812.40px;font-size:20.20px;color:#1a6ed8;-webkit-text-stroke:0.55px #1a6ed8;transform:scaleX(0.9195);">Close</span>
<div style="left:1432.0px;top:795.0px;width:106.7px;height:55.5px;background:#136dd8;border-radius:6px;"></div>
<span id="tx82" class="t" style="left:1462.74px;top:812.40px;font-size:20.20px;color:#fff;-webkit-text-stroke:0.55px #fff;transform:scaleX(1.0033);">Land</span>
<span id="tx83" class="t" style="left:403.26px;top:863.00px;font-size:24.71px;color:#1a1a1a;-webkit-text-stroke:0.67px #1a1a1a;transform:scaleX(0.9813);">Trailer Details</span>
<div style="left:564.0px;top:883.0px;width:1007.0px;height:1.0px;background:#dcdcdc;"></div>
<div style="left:1208.0px;top:884.0px;width:1.0px;height:780.0px;background:#dcdcdc;"></div>
<span id="tx84" class="t" style="left:408.98px;top:914.60px;font-size:20.35px;color:#737373;-webkit-text-stroke:0.55px #737373;transform:scaleX(0.9152);">Trailer ID*</span>
<span id="tx85" class="t" style="left:672.09px;top:914.60px;font-size:20.35px;color:#737373;-webkit-text-stroke:0.55px #737373;transform:scaleX(0.8724);">SCAC Code*</span>
<span id="tx86" class="t" style="left:938.74px;top:914.60px;font-size:20.35px;color:#737373;-webkit-text-stroke:0.55px #737373;transform:scaleX(0.9351);">Dimensions (Ft)*</span>
<div style="left:404.0px;top:953.0px;width:235.5px;height:56.0px;border:1px solid #c6c6c6;border-radius:7px;"></div>
<div style="left:672.4px;top:953.0px;width:235.0px;height:56.0px;border:1px solid #c6c6c6;border-radius:7px;"></div>
<div style="left:940.3px;top:953.0px;width:235.4px;height:56.0px;border:1px solid #c6c6c6;border-radius:7px;"></div>
<span id="tx87" class="t" style="left:407.88px;top:1043.00px;font-size:20.93px;color:#737373;-webkit-text-stroke:0.57px #737373;transform:scaleX(0.8839);">Load Type</span>
<span id="tx88" class="t" style="left:677.88px;top:1043.00px;font-size:20.93px;color:#737373;-webkit-text-stroke:0.57px #737373;transform:scaleX(0.8867);">Door Type</span>
<div style="left:403.0px;top:1081.0px;width:235.7px;height:56.0px;border:1px solid #c6c6c6;border-radius:7px;"></div>
<span id="tx89" class="t" style="left:417.98px;top:1098.80px;font-size:20.35px;color:#646464;transform:scaleX(0.9121);">Please select</span>
<svg style="left:605.8px;top:1104.5px;" width="16" height="10" viewBox="0 0 16 10"><path d="M0 0 L15.5 0 L7.75 10 Z" fill="#555"/></svg>
<div style="left:673.3px;top:1081.0px;width:235.0px;height:56.0px;border:1px solid #c6c6c6;border-radius:7px;"></div>
<span id="tx90" class="t" style="left:687.98px;top:1098.80px;font-size:20.35px;color:#646464;transform:scaleX(0.9087);">Please select</span>
<svg style="left:875.4px;top:1104.5px;" width="16" height="10" viewBox="0 0 16 10"><path d="M0 0 L15.5 0 L7.75 10 Z" fill="#555"/></svg>
<div style="left:941.0px;top:1081.0px;width:236.0px;height:162.0px;background:#f4f4f4;border:1px solid #c4c4c4;border-radius:6px;"></div>
<svg style="left:967.6px;top:1105.0px;" width="20" height="20" viewBox="0 0 20 20"><circle cx="10" cy="10" r="7.6" fill="#fff" stroke="#1a6cdc" stroke-width="1.3"/><circle cx="10" cy="10" r="5" fill="#1a6cdc"/></svg>
<svg style="left:967.6px;top:1150.2px;" width="20" height="20" viewBox="0 0 20 20"><circle cx="10" cy="10" r="7.8" fill="#fff" stroke="#6b6b6b" stroke-width="1.2"/></svg>
<svg style="left:967.6px;top:1195.4px;" width="20" height="20" viewBox="0 0 20 20"><circle cx="10" cy="10" r="7.8" fill="#fff" stroke="#6b6b6b" stroke-width="1.2"/></svg>
<span id="tx91" class="t" style="left:1001.60px;top:1104.60px;font-size:20.35px;color:#646464;transform:scaleX(0.8690);">CRTV / Recycle?</span>
<span id="tx92" class="t" style="left:1001.68px;top:1149.80px;font-size:20.35px;color:#646464;transform:scaleX(0.8891);">Storage Trailer?</span>
<span id="tx93" class="t" style="left:1002.21px;top:1195.00px;font-size:20.35px;color:#646464;transform:scaleX(0.9135);">Jackpot Trailer?</span>
<div style="left:404.0px;top:1187.0px;width:236.0px;height:56.0px;background:#f9f9f9;border:1px solid #c6c6c6;border-radius:7px;"></div>
<span id="tx94" class="t" style="left:418.79px;top:1193.20px;font-size:20.35px;color:#646464;transform:scaleX(0.9074);">Loaded Trailer</span>
<span id="tx95" class="t" style="left:418.77px;top:1216.40px;font-size:20.35px;color:#646464;transform:scaleX(0.9147);">Landing without PO</span>
<svg style="left:604.5px;top:1207.0px;" width="16" height="16" viewBox="0 0 16 16"><rect x="0.5" y="0.5" width="15" height="15" rx="2.5" fill="#1766d6"/><path d="M4 8.2 L6.8 11 L12 5.2" fill="none" stroke="#fff" stroke-width="1.6"/></svg>
<div style="left:674.0px;top:1187.0px;width:235.0px;height:56.0px;background:#f9f9f9;border:1px solid #c6c6c6;border-radius:7px;"></div>
<span id="tx96" class="t" style="left:689.99px;top:1193.20px;font-size:20.35px;color:#646464;transform:scaleX(0.9028);">Trailer Out of</span>
<span id="tx97" class="t" style="left:689.59px;top:1216.40px;font-size:20.35px;color:#646464;transform:scaleX(0.8712);">Service?</span>
<svg style="left:874.0px;top:1207.0px;" width="16" height="16" viewBox="0 0 16 16"><rect x="0.5" y="0.5" width="15" height="15" rx="2.5" fill="#1766d6"/><path d="M4 8.2 L6.8 11 L12 5.2" fill="none" stroke="#fff" stroke-width="1.6"/></svg>
<div style="left:403.0px;top:1293.0px;width:236.0px;height:56.0px;background:#f9f9f9;border:1px solid #c6c6c6;border-radius:7px;"></div>
<span id="tx98" class="t" style="left:418.03px;top:1310.70px;font-size:20.35px;color:#646464;transform:scaleX(0.8835);">Live-Load?</span>
<svg style="left:603.6px;top:1313.0px;" width="16" height="16" viewBox="0 0 16 16"><rect x="0.5" y="0.5" width="15" height="15" rx="2.5" fill="#1766d6"/><path d="M4 8.2 L6.8 11 L12 5.2" fill="none" stroke="#fff" stroke-width="1.6"/></svg>
<div style="left:673.0px;top:1293.0px;width:503.0px;height:56.0px;background:#f9f9f9;border:1px solid #c6c6c6;border-radius:7px;"></div>
<span id="tx99" class="t" style="left:689.09px;top:1310.70px;font-size:20.35px;color:#646464;transform:scaleX(0.9021);">Trailer available for O/B?</span>
<span id="tx100" class="t" style="left:1032.15px;top:1312.00px;font-size:16.28px;color:#222;transform:scaleX(0.9882);">Yes</span>
<svg style="left:1064.9px;top:1311.0px;" width="20" height="20" viewBox="0 0 20 20"><circle cx="10" cy="10" r="7.8" fill="#fff" stroke="#6b6b6b" stroke-width="1.2"/></svg>
<span id="tx101" class="t" style="left:1114.43px;top:1312.00px;font-size:16.28px;color:#222;transform:scaleX(1.0225);">No</span>
<svg style="left:1141.6px;top:1311.0px;" width="20" height="20" viewBox="0 0 20 20"><circle cx="10" cy="10" r="7.6" fill="#fff" stroke="#1a6cdc" stroke-width="1.3"/><circle cx="10" cy="10" r="5" fill="#1a6cdc"/></svg>
<span id="tx102" class="t" style="left:401.22px;top:1389.70px;font-size:26.02px;color:#1a1a1a;-webkit-text-stroke:0.70px #1a1a1a;transform:scaleX(0.9282);">For Import POs</span>
<div style="left:579.5px;top:1411.0px;width:629.1px;height:1.0px;background:#dcdcdc;"></div>
<span id="tx103" class="t" style="left:408.57px;top:1441.60px;font-size:20.35px;color:#737373;-webkit-text-stroke:0.55px #737373;transform:scaleX(0.9007);">Seal No</span>
<span id="tx104" class="t" style="left:672.86px;top:1441.60px;font-size:20.35px;color:#737373;-webkit-text-stroke:0.55px #737373;transform:scaleX(0.9044);">Agency</span>
<span id="tx105" class="t" style="left:939.39px;top:1441.60px;font-size:20.35px;color:#737373;-webkit-text-stroke:0.55px #737373;transform:scaleX(0.8850);">Container SCAC</span>
<div style="left:404.0px;top:1480.0px;width:235.5px;height:56.0px;border:1px solid #c6c6c6;border-radius:7px;"></div>
<div style="left:672.4px;top:1480.0px;width:235.0px;height:56.0px;border:1px solid #c6c6c6;border-radius:7px;"></div>
<div style="left:940.3px;top:1480.0px;width:235.4px;height:56.0px;border:1px solid #c6c6c6;border-radius:7px;"></div>
<div style="left:404.0px;top:1576.0px;width:236.0px;height:56.0px;background:#f9f9f9;border:1px solid #c6c6c6;border-radius:7px;"></div>
<span id="tx106" class="t" style="left:419.46px;top:1593.80px;font-size:20.35px;color:#646464;transform:scaleX(0.9038);">Seal Intact?</span>
<svg style="left:604.0px;top:1595.3px;" width="16" height="16" viewBox="0 0 16 16"><rect x="0.5" y="0.5" width="15" height="15" rx="2.5" fill="#1766d6"/><path d="M4 8.2 L6.8 11 L12 5.2" fill="none" stroke="#fff" stroke-width="1.6"/></svg>
<div style="left:673.0px;top:1576.0px;width:235.0px;height:56.0px;background:#f9f9f9;border:1px solid #c6c6c6;border-radius:7px;"></div>
<span id="tx107" class="t" style="left:688.17px;top:1593.80px;font-size:20.35px;color:#646464;transform:scaleX(0.9022);">Seal Matching?</span>
<svg style="left:873.0px;top:1595.3px;" width="16" height="16" viewBox="0 0 16 16"><rect x="0.5" y="0.5" width="15" height="15" rx="2.5" fill="#1766d6"/><path d="M4 8.2 L6.8 11 L12 5.2" fill="none" stroke="#fff" stroke-width="1.6"/></svg>
<span id="tx108" class="t" style="left:1238.76px;top:942.40px;font-size:18.60px;color:#737373;-webkit-text-stroke:0.50px #737373;transform:scaleX(1.0092);">Landing Comments</span>
<div style="left:1240.0px;top:979.0px;width:299.0px;height:88.0px;border:1px solid #8c8c8c;border-radius:9px;"></div>
<span id="tx109" class="t" style="left:1254.86px;top:999.70px;font-size:17.44px;color:#6b6b6b;transform:scaleX(1.0056);">Label</span>
<span id="tx110" class="t" style="left:1488.67px;top:1044.80px;font-size:12.50px;color:#6b6b6b;transform:scaleX(1.0823);">0/300</span>
<span id="tx111" class="t" style="left:1255.27px;top:1077.30px;font-size:12.50px;color:#6b6b6b;transform:scaleX(1.0035);">Helper Text</span>
<span id="tx112" class="t" style="left:1239.88px;top:1126.50px;font-size:18.75px;color:#737373;-webkit-text-stroke:0.51px #737373;">Trailer Comments</span>
<div style="left:1240.0px;top:1163.0px;width:299.0px;height:88.0px;border:1px solid #8c8c8c;border-radius:9px;"></div>
<span id="tx113" class="t" style="left:1254.86px;top:1183.70px;font-size:17.44px;color:#6b6b6b;transform:scaleX(1.0056);">Label</span>
<span id="tx114" class="t" style="left:1488.67px;top:1228.80px;font-size:12.50px;color:#6b6b6b;transform:scaleX(1.0823);">0/300</span>
<span id="tx115" class="t" style="left:1255.27px;top:1261.30px;font-size:12.50px;color:#6b6b6b;transform:scaleX(1.0035);">Helper Text</span>
<span id="tx116" class="t" style="left:1240.22px;top:1309.40px;font-size:19.48px;color:#737373;-webkit-text-stroke:0.53px #737373;transform:scaleX(0.9408);">Vendor Ship Date</span>
<div style="left:1240.0px;top:1347.0px;width:165.0px;height:52.0px;border:1px solid #c6c6c6;border-radius:4px;"></div>
<span id="tx117" class="t" style="left:1255.67px;top:1365.40px;font-size:15.55px;color:#222;transform:scaleX(0.9516);">13/10/2021</span>
<svg style="left:1355.0px;top:1365.0px;" width="30" height="16" viewBox="0 0 30 16"><path d="M10 1.5 L3.5 7.5 L10 13.5" fill="none" stroke="#555" stroke-width="1.3"/></svg>
<svg style="left:1382.0px;top:1365.0px;" width="14" height="16" viewBox="0 0 14 16"><path d="M3 1.5 L9.5 7.5 L3 13.5" fill="none" stroke="#555" stroke-width="1.3"/></svg>
<span id="tx118" class="t" style="left:1239.89px;top:1434.00px;font-size:18.02px;color:#737373;-webkit-text-stroke:0.49px #737373;transform:scaleX(1.0458);">Yard Location*</span>
<div style="left:1240.0px;top:1471.0px;width:299.0px;height:56.0px;border:1px solid #c6c6c6;border-radius:8px;"></div>
<svg style="left:1368.0px;top:1541.0px;" width="16" height="14" viewBox="0 0 16 14"><path d="M2.5 0.5 L2.5 8.5 L12 8.5" fill="none" stroke="#1a6ed8" stroke-width="1.5"/><path d="M10 5.5 L14 8.5 L10 11.5 Z" fill="#1a6ed8"/></svg>
<span id="tx119" class="t" style="left:1389.65px;top:1540.30px;font-size:17.44px;color:#1a6ed8;transform:scaleX(0.9683);">Get optimal location</span>
<div style="left:1930.0px;top:1836.4px;width:1.0px;height:114.6px;background:#f0f0f2;"></div>
</body></html>
